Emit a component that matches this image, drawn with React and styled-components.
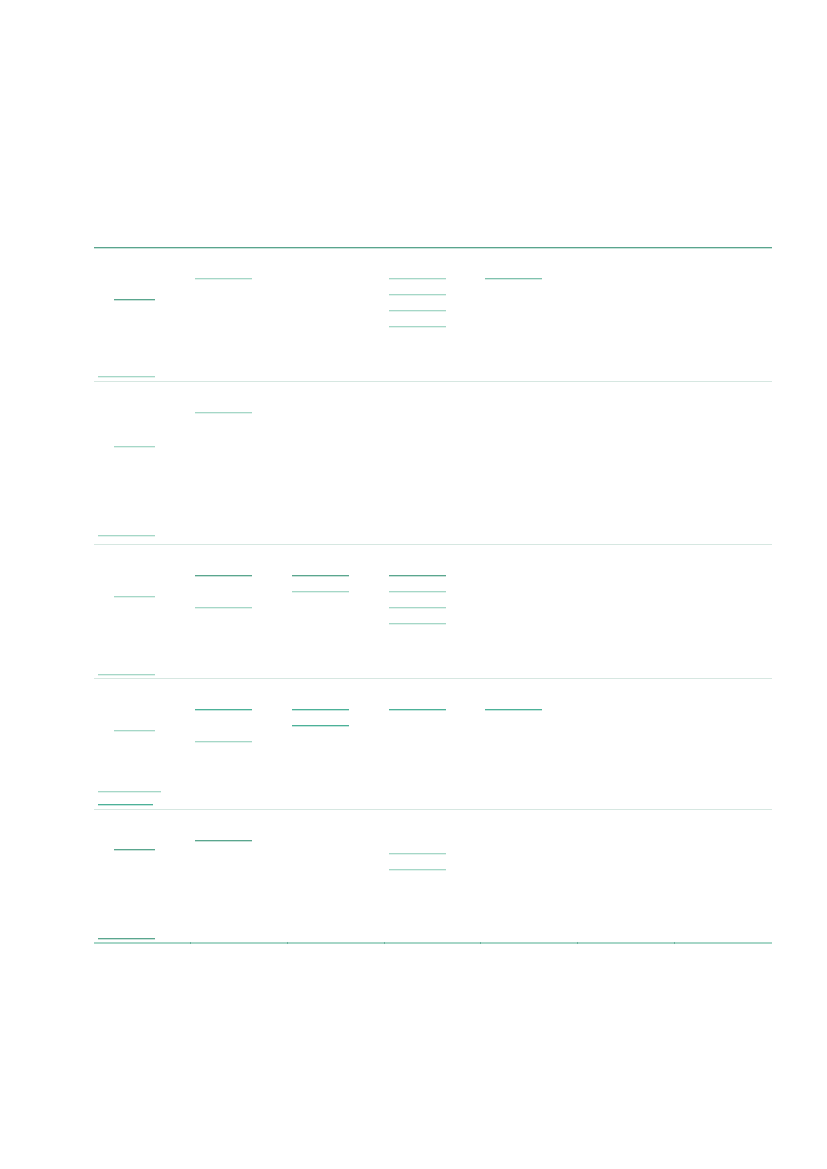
import styled, { createGlobalStyle } from "styled-components";

const GlobalStyle = createGlobalStyle`
    html, body {
        margin: 0;
        padding: 0;
        background: #ffffff;
        font-family: "Liberation Sans", Arial, sans-serif;
    }
`;

const tones = {
    dark: "#5aa68e",
    teal: "#4cb198",
    mid: "#80c2ae",
    light: "#a5d7c7",
};

// cells: one array of lines per column 2..7, null = empty line
const rows = [
    {
        h: 134,
        leadTop: 51,
        lead: "dark",
        tail: [{ w: 57, c: "light" }],
        tailGap: 4,
        cells: [["light"], [], ["light", "light", "light", "light"], ["mid"], [], []],
    },
    {
        h: 163,
        leadTop: 64,
        lead: "light",
        tail: [{ w: 57, c: "light" }],
        tailGap: 8,
        cells: [["light"], [], [], [], [], []],
    },
    {
        h: 134,
        leadTop: 51,
        lead: "light",
        tail: [{ w: 57, c: "light" }],
        tailGap: 3,
        cells: [["dark", null, "light"], ["dark", "light"], ["dark", "light", "light", "light"], [], [], []],
    },
    {
        h: 131,
        leadTop: 51,
        lead: "light",
        tail: [
            { w: 63, c: "light" },
            { w: 55, c: "teal" },
        ],
        tailGap: 4,
        cells: [["teal", null, "light"], ["teal", "teal"], ["teal"], ["teal"], [], []],
    },
    {
        h: 135,
        leadTop: 39,
        lead: "dark",
        tail: [{ w: 57, c: "dark" }],
        tailGap: 3,
        cells: [["dark"], [], [null, "light", "light"], [], [], []],
        shift: [0, 0, -3, 0, 0, 0],
    },
];

function App() {
    return (
        <Page>
            <GlobalStyle />
            <Table>
                {rows.map((row, i) => {
                    const last = i === rows.length - 1;
                    return (
                        <Row key={i} $h={row.h} $first={i === 0} $last={last}>
                            <LeadCell $top={row.leadTop} $bottom={row.tailGap} $last={last}>
                                <Bar $w={41} $offset={16} $tone={row.lead} />
                                <Tail>
                                    {row.tail.map((t, k) => (
                                        <Bar key={k} $w={t.w} $tone={t.c} />
                                    ))}
                                </Tail>
                            </LeadCell>
                            {row.cells.map((lines, j) => (
                                <Cell key={j} $last={last} $shift={row.shift ? row.shift[j] : 0}>
                                    {lines.map((tone, k) => (
                                        <Line key={k}>{tone && <Bar $w={57} $tone={tone} />}</Line>
                                    ))}
                                </Cell>
                            ))}
                        </Row>
                    );
                })}
            </Table>
        </Page>
    );
}

export default App;

const Page = styled.div`
    width: 827px;
    min-height: 1169px;
    padding: 247px 0 0 94px;
    box-sizing: border-box;
`;

const Table = styled.div`
    width: 678px;
    display: flex;
    flex-direction: column;
`;

const Row = styled.div`
    display: grid;
    grid-template-columns: repeat(7, 1fr);
    min-height: ${(p) => p.$h}px;
    box-sizing: border-box;
    border-top: 1px solid ${(p) => (p.$first ? "#5aa48d" : "#d6e7e1")};
    box-shadow: ${(p) => (p.$first ? "inset 0 1px 0 #c6e3da" : "none")};
    border-bottom: ${(p) => (p.$last ? "2px solid #a6d6c7" : "none")};
`;

const tick = `
    content: "";
    position: absolute;
    right: 0;
    bottom: -2px;
    width: 1px;
    height: 2px;
    background: #6cb29c;
`;

const LeadCell = styled.div`
    position: relative;
    display: flex;
    flex-direction: column;
    padding: ${(p) => p.$top}px 0 ${(p) => p.$bottom}px 4px;

    &::after {
        ${tick}
        display: ${(p) => (p.$last ? "block" : "none")};
    }
`;

const Tail = styled.div`
    margin-top: auto;
    display: flex;
    flex-direction: column;
    gap: 12px;
`;

const Cell = styled.div`
    position: relative;
    padding: ${(p) => 15 + p.$shift}px 0 0 4px;

    &:not(:last-child)::after {
        ${tick}
        display: ${(p) => (p.$last ? "block" : "none")};
    }
`;

const Line = styled.div`
    height: 16px;
    display: flex;
    align-items: flex-end;
`;

const Bar = styled.div`
    width: ${(p) => p.$w}px;
    height: 1px;
    margin-left: ${(p) => p.$offset || 0}px;
    background: ${(p) => tones[p.$tone]};
    box-shadow: 0 1px 0 ${(p) => tones[p.$tone]}55;
`;
